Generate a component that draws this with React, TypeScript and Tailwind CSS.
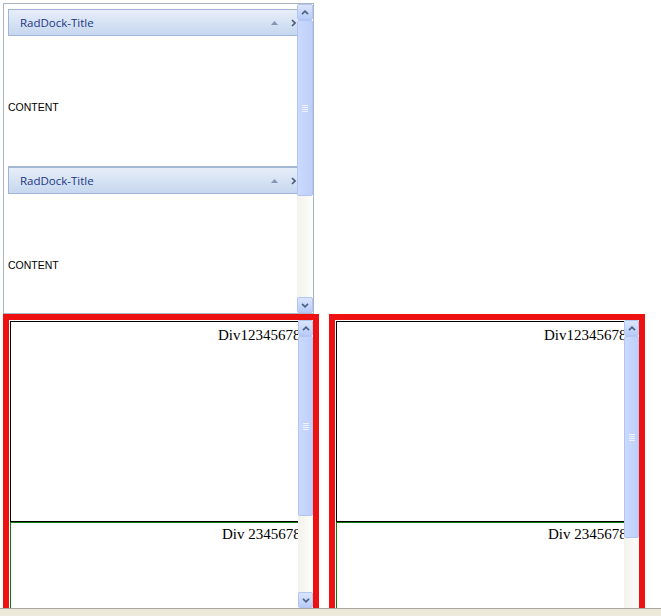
import React from 'react'

// XP-style scroll arrow button
function ArrowButton({ dir }: { dir: 'up' | 'down' }) {
  return (
    <div className="h-[16px] w-full shrink-0 rounded-[2px] border border-[#b2c6f4] bg-gradient-to-b from-[#dbe5fd] to-[#b8cbf7] flex items-center justify-center">
      <svg width="8" height="5" viewBox="0 0 8 5">
        <path
          d={dir === 'up' ? 'M1 4.2 L4 1.2 L7 4.2' : 'M1 0.8 L4 3.8 L7 0.8'}
          fill="none"
          stroke="#4d6185"
          strokeWidth="1.7"
        />
      </svg>
    </div>
  )
}

function Thumb({ className }: { className: string }) {
  return (
    <div className={`shrink-0 rounded-[2px] border border-[#b2c6f4] bg-gradient-to-r from-[#cbd9fc] to-[#bdcffa] flex items-center justify-center ${className}`}>
      <div className="flex flex-col gap-[1px]">
        {[0, 1, 2, 3].map(i => (
          <div key={i} className="w-[6px] h-[1px] bg-[#eef3fe]" />
        ))}
      </div>
    </div>
  )
}

function ScrollBar({ thumb, width }: { thumb: string; width: string }) {
  return (
    <div className={`flex flex-col shrink-0 bg-gradient-to-r from-[#f3f2ec] to-[#fdfdfa] ${width}`}>
      <ArrowButton dir="up" />
      <Thumb className={thumb} />
      <div className="flex-1" />
      <ArrowButton dir="down" />
    </div>
  )
}

function Dock() {
  return (
    <div className="w-[300px] border-b border-[#a9b6c9]">
      <div className="h-[27px] border border-[#9fb6d6] bg-gradient-to-b from-[#e7eef9] to-[#c6d7ef] flex items-center pl-[11px]">
        <span className="text-[11.5px] text-[#1b3783]" style={{ fontFamily: '"Open Sans", "Noto Sans", sans-serif' }}>
          RadDock-Title
        </span>
        <div className="ml-auto flex items-center gap-[13px] pr-[11px]">
          <svg width="7" height="4" viewBox="0 0 7 4">
            <path d="M0 4 L3.5 0 L7 4 Z" fill="#8396b2" />
          </svg>
          <svg width="5" height="8" viewBox="0 0 5 8">
            <path d="M1 1 L4 4 L1 7" fill="none" stroke="#4d5b70" strokeWidth="1.6" />
          </svg>
        </div>
      </div>
      <div className="h-[130px] pt-[57px]">
        <span className="text-[10.5px] leading-[13px] text-black" style={{ fontFamily: '"Liberation Sans", Arial, sans-serif' }}>
          CONTENT
        </span>
      </div>
    </div>
  )
}

function RedBox({ height, thumb }: { height: string; thumb: string }) {
  return (
    <div className={`w-[316px] border-[6px] border-[#ee1111] flex ${height}`}>
      <div className="flex-1 overflow-hidden p-[1px]" style={{ fontFamily: '"Liberation Serif", "Times New Roman", serif' }}>
        <div className="w-[320px] h-[201px] border border-black pt-[2px] pl-[207px] text-[15px] whitespace-nowrap text-black">
          Div123456789
        </div>
        <div className="w-[320px] h-[200px] border border-[#0a7a0a] pl-[211px] text-[15px] whitespace-nowrap text-black">
          Div 23456789
        </div>
      </div>
      <ScrollBar thumb={thumb} width="w-[15px]" />
    </div>
  )
}

export default function App() {
  return (
    <div className="w-[661px] h-[616px] bg-white flex flex-col overflow-hidden">
      <div className="h-[608px] overflow-hidden">
        {/* RadDock zone */}
        <div className="ml-[3px] mt-[3px] w-[311px] h-[311px] border border-[#a7b4c6] flex">
          <div className="flex-1 overflow-hidden pl-[4px] pt-[5px]">
            <Dock />
            <Dock />
          </div>
          <ScrollBar thumb="h-[176px]" width="w-[16px]" />
        </div>

        {/* scrolling divs */}
        <div className="flex gap-[10px] pl-[3px]">
          <RedBox height="h-[300px]" thumb="h-[180px]" />
          <RedBox height="h-[340px]" thumb="h-[202px]" />
        </div>
      </div>
      <div className="h-[8px] border-t border-[#a8a7a0] bg-[#ece9d8]" />
    </div>
  )
}
